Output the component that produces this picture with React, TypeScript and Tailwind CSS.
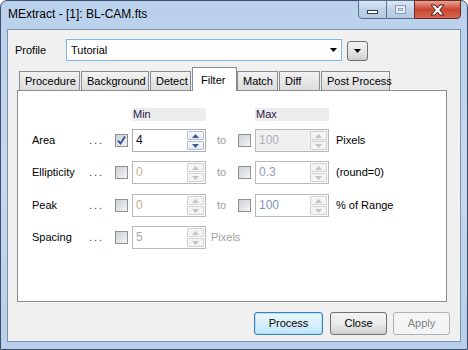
import React from "react";

const font = { fontFamily: '"Liberation Sans", Arial, sans-serif' };

function SpinArrow({ up, enabled }: { up: boolean; enabled: boolean }) {
  const c = enabled ? "#3c5a9a" : "#c4c4c4";
  return (
    <svg width="7" height="4" viewBox="0 0 7 4">
      {up ? <path d="M0 4 L3.5 0 L7 4 Z" fill={c} /> : <path d="M0 0 L7 0 L3.5 4 Z" fill={c} />}
    </svg>
  );
}

function SpinBox({
  value,
  textColor,
  bg,
  enabled,
}: {
  value: string;
  textColor: string;
  bg: string;
  enabled: boolean;
}) {
  return (
    <div
      className={`flex h-[23px] w-[74px] border ${enabled ? "border-[#abadb3]" : "border-[#b9b9b9]"} ${bg}`}
    >
      <div className={`flex-1 pl-[3px] pt-[3px] text-[12px] leading-[15px] ${textColor}`}>{value}</div>
      <div className="flex w-[18px] flex-col gap-px py-px pr-px">
        <div
          className={`flex flex-1 items-center justify-center rounded-[1px] border ${
            enabled ? "border-[#b4c0d0] bg-gradient-to-b from-[#f8fafc] to-[#e4e9f0]" : "border-[#d2d2d2] bg-[#f4f4f4]"
          }`}
        >
          <SpinArrow up enabled={enabled} />
        </div>
        <div
          className={`flex flex-1 items-center justify-center rounded-[1px] border ${
            enabled ? "border-[#b4c0d0] bg-gradient-to-b from-[#f8fafc] to-[#e4e9f0]" : "border-[#d2d2d2] bg-[#f4f4f4]"
          }`}
        >
          <SpinArrow up={false} enabled={enabled} />
        </div>
      </div>
    </div>
  );
}

function CheckBox({ checked }: { checked?: boolean }) {
  return (
    <div className="flex h-[13px] w-[13px] items-center justify-center border border-[#8e8f8f] bg-white">
      <div className="flex h-[11px] w-[11px] items-center justify-center bg-gradient-to-br from-[#cbcfd5] to-[#f6f6f6]">
        {checked && (
          <svg width="9" height="9" viewBox="0 0 9 9">
            <path d="M1 4.5 L3.5 7.5 L8 0.5" stroke="#2a4fa0" strokeWidth="1.8" fill="none" />
          </svg>
        )}
      </div>
    </div>
  );
}

const dots = <span className="text-[11px] tracking-[2px] text-[#0a5a20]">...</span>;

function Row({
  label,
  minChecked,
  minVal,
  minColor,
  minEnabled,
  maxVal,
  maxColor,
  maxBg,
  maxEnabled,
  unit,
  noMax,
}: {
  label: string;
  minChecked?: boolean;
  minVal: string;
  minColor: string;
  minEnabled: boolean;
  maxVal?: string;
  maxColor?: string;
  maxBg?: string;
  maxEnabled?: boolean;
  unit: string;
  noMax?: boolean;
}) {
  return (
    <div className="flex h-[23px] items-center pl-[14px] text-[11px]">
      <span className="w-[54px] text-black">{label}</span>
      <span className="w-[29px] pl-[3px]">{dots}</span>
      <span className="w-[17px]">
        <CheckBox checked={minChecked} />
      </span>
      <SpinBox value={minVal} textColor={minColor} bg="bg-white" enabled={minEnabled} />
      {noMax ? (
        <span className="ml-[5px] text-[#a0a0a0]">{unit}</span>
      ) : (
        <>
          <span className="ml-[11px] w-[21px] text-[#a0a0a0]">to</span>
          <span className="w-[17px]">
            <CheckBox />
          </span>
          <SpinBox value={maxVal!} textColor={maxColor!} bg={maxBg!} enabled={!!maxEnabled} />
          <span className="ml-[7px] text-black">{unit}</span>
        </>
      )}
    </div>
  );
}

const tabs = [
  { t: "Procedure", w: 62 },
  { t: "Background", w: 69 },
  { t: "Detect", w: 42 },
  { t: "Filter", w: 45, sel: true },
  { t: "Match", w: 42 },
  { t: "Diff", w: 42 },
  { t: "Post Process", w: 70 },
];

export default function App() {
  return (
    <div className="h-[350px] w-[468px] bg-white" style={font}>
      <div className="relative flex h-[350px] w-[468px] flex-col rounded-t-[7px] border border-[#3d4f66] bg-gradient-to-b from-[#b9d1ec] via-[#c5d9ef] to-[#b7cfea]">
        {/* title bar */}
        <div className="flex h-[28px] items-start">
          <span className="pl-[7px] pt-[6px] text-[12px] leading-[15px] text-black">MExtract - [1]: BL-CAM.fts</span>
          <div className="ml-auto mr-[6px] flex h-[19px] -mt-px">
            <div className="flex w-[29px] items-center justify-center rounded-bl-[4px] border border-[#58708f] bg-gradient-to-b from-[#dce7f4] via-[#c0d2e8] to-[#b5c9e2]">
              <div className="mt-[5px] h-[4px] w-[11px] border border-[#2f3d52] bg-white" />
            </div>
            <div className="flex w-[27px] items-center justify-center border-y border-[#58708f] bg-gradient-to-b from-[#dce7f4] via-[#c0d2e8] to-[#b5c9e2]">
              <div className="h-[9px] w-[11px] border border-[#8d9db3] bg-[#e6edf6] p-[2px]">
                <div className="h-full w-full border border-[#8d9db3]" />
              </div>
            </div>
            <div className="flex w-[47px] items-center justify-center rounded-br-[4px] border border-[#6b2a22] bg-gradient-to-b from-[#e8a394] via-[#c9452f] to-[#d46a50]">
              <svg width="15" height="12" viewBox="0 0 15 12">
                <path
                  d="M1 1 L5 1 L7.5 4 L10 1 L14 1 L9.7 6 L14 11 L10 11 L7.5 8 L5 11 L1 11 L5.3 6 Z"
                  fill="#ffffff"
                  stroke="#4a1a12"
                  strokeWidth="1"
                  strokeLinejoin="round"
                />
              </svg>
            </div>
          </div>
        </div>
        {/* client area */}
        <div className="mx-[6px] flex h-[313px] flex-col border border-[#7f92ab] bg-[#f0f0f0]">
          <div className="flex items-center pt-[9px]">
            <span className="w-[58px] pl-[7px] text-[11px] text-black">Profile</span>
            <div className="flex h-[22px] w-[276px] items-center border border-[#7eb4ea] bg-white">
              <span className="pl-[4px] text-[11px] text-black">Tutorial</span>
              <svg className="ml-auto mr-[4px]" width="7" height="4" viewBox="0 0 7 4">
                <path d="M0 0 L7 0 L3.5 4 Z" fill="#000" />
              </svg>
            </div>
            <div className="ml-[5px] mt-[2px] flex h-[20px] w-[21px] items-center justify-center rounded-[3px] border border-[#707070] bg-gradient-to-b from-[#f2f2f2] via-[#e6e6e6] to-[#cfcfcf]">
              <svg width="7" height="4" viewBox="0 0 7 4">
                <path d="M0 0 L7 0 L3.5 4 Z" fill="#000" />
              </svg>
            </div>
          </div>
          {/* tabs */}
          <div className="relative z-10 ml-[11px] mt-[6px] flex h-[23px] items-end">
            {tabs.map((t) =>
              t.sel ? (
                <div
                  key={t.t}
                  className="-mb-px flex h-[24px] items-start whitespace-nowrap border border-b-0 border-[#898c95] bg-white pl-[8px] pt-[4px] text-[11px] text-black"
                  style={{ width: t.w }}
                >
                  {t.t}
                </div>
              ) : (
                <div
                  key={t.t}
                  className="flex h-[19px] items-center whitespace-nowrap border border-b-0 border-[#898c95] bg-gradient-to-b from-[#f2f2f2] to-[#dcdcdc] pl-[5px] text-[11px] text-black"
                  style={{ width: t.w - 1, marginRight: 1 }}
                >
                  {t.t}
                </div>
              )
            )}
          </div>
          <div className="ml-[9px] flex h-[212px] w-[430px] flex-col border border-[#898c95] bg-white">
            <div className="mt-[17px] flex h-[13px] text-[11px] leading-[13px] text-[#2a1a48]">
              <div className="ml-[114px] w-[74px] bg-[#ededed] pl-[1px]">Min</div>
              <div className="ml-[49px] w-[74px] bg-[#ededed] pl-[1px]">Max</div>
            </div>
            <div className="mt-[8px] flex flex-col">
              <Row
                label="Area"
                minChecked
                minVal="4"
                minColor="text-[#101020]"
                minEnabled
                maxVal="100"
                maxColor="text-[#a8aeb8]"
                maxBg="bg-[#f0f0f0]"
                maxEnabled={false}
                unit="Pixels"
              />
              <div className="h-[9px]" />
              <Row
                label="Ellipticity"
                minVal="0"
                minColor="text-[#c8b090]"
                minEnabled={false}
                maxVal="0.3"
                maxColor="text-[#8c9cb2]"
                maxBg="bg-white"
                maxEnabled={false}
                unit="(round=0)"
              />
              <div className="h-[10px]" />
              <Row
                label="Peak"
                minVal="0"
                minColor="text-[#c8b090]"
                minEnabled={false}
                maxVal="100"
                maxColor="text-[#7e94bc]"
                maxBg="bg-white"
                maxEnabled={false}
                unit="% of Range"
              />
              <div className="h-[9px]" />
              <Row label="Spacing" minVal="5" minColor="text-[#a8a8a8]" minEnabled={false} unit="Pixels" noMax />
            </div>
          </div>
          {/* buttons */}
          <div className="mt-[10px] flex justify-end gap-[7px] pr-[10px] text-[11px]">
            <div className="flex h-[23px] w-[69px] items-center justify-center rounded-[3px] border border-[#3c7fb1] bg-gradient-to-b from-[#eaf6fd] via-[#d9f0fc] to-[#bee6fd] text-black shadow-[inset_0_0_0_1px_#aee0f8]">
              Process
            </div>
            <div className="flex h-[23px] w-[57px] items-center justify-center rounded-[3px] border border-[#707070] bg-gradient-to-b from-[#f2f2f2] via-[#ebebeb] to-[#cfcfcf] text-black">
              Close
            </div>
            <div className="-ml-px flex h-[23px] w-[57px] items-center justify-center rounded-[3px] border border-[#adb2b5] bg-[#f4f4f4] text-[#838383]">
              Apply
            </div>
          </div>
        </div>
      </div>
    </div>
  );
}
